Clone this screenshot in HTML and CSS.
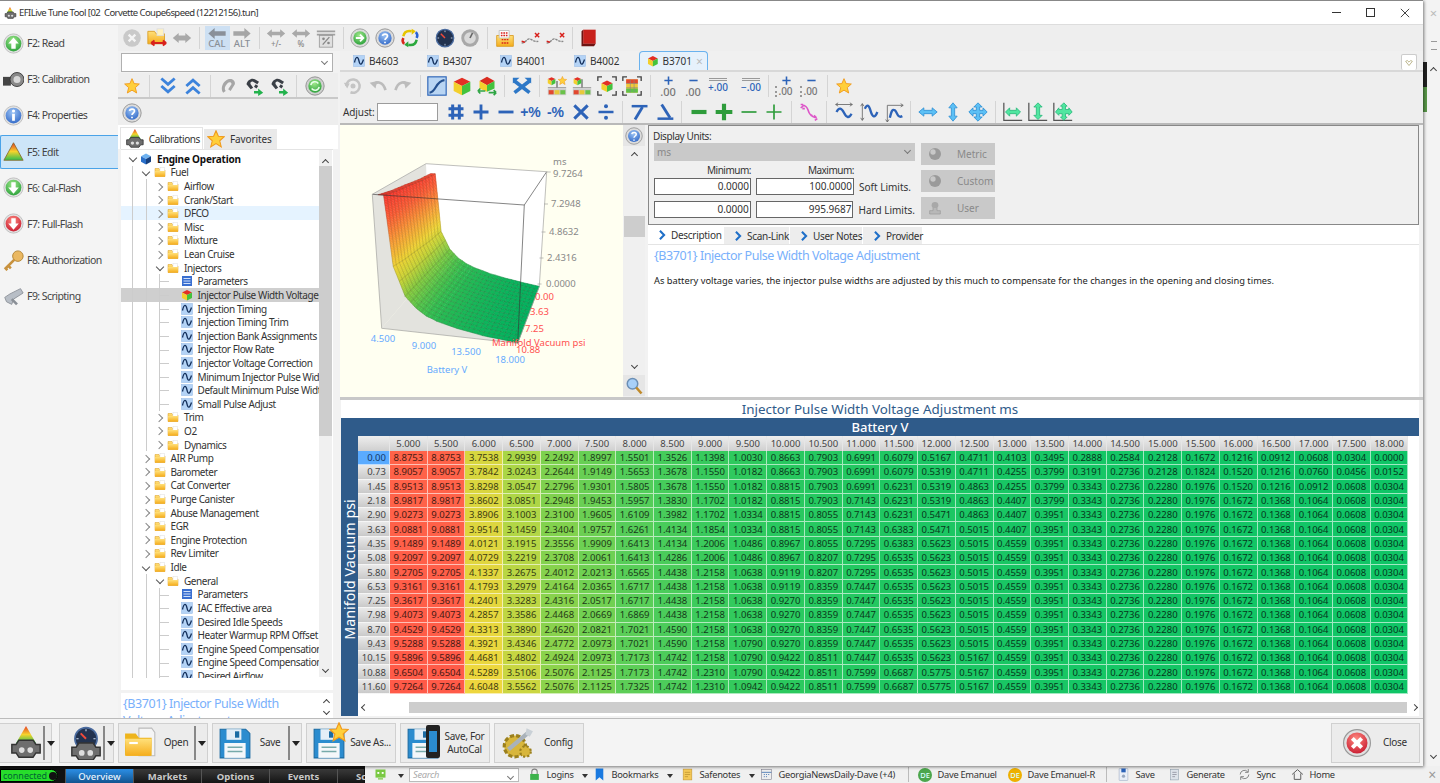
FILE: index.html
```html
<!DOCTYPE html>
<html lang="en">
<head>
<meta charset="utf-8">
<title>EFILive Tune Tool</title>
<link rel="stylesheet" href="styles.css">
</head>
<body>
<svg class="defs" width="0" height="0">
<defs>
<linearGradient id="triG" x1="0" y1="0" x2="0" y2="1"><stop offset="0" stop-color="#e53b24"/><stop offset=".5" stop-color="#f6d32c"/><stop offset="1" stop-color="#2ebd4e"/></linearGradient>
<radialGradient id="gGreen" cx=".45" cy=".3" r=".8"><stop offset="0" stop-color="#9fe88a"/><stop offset="1" stop-color="#1f9a33"/></radialGradient>
<radialGradient id="gRed" cx=".45" cy=".3" r=".8"><stop offset="0" stop-color="#ff8a80"/><stop offset="1" stop-color="#c4122a"/></radialGradient>
<radialGradient id="gBlue" cx=".45" cy=".3" r=".8"><stop offset="0" stop-color="#9cc4f5"/><stop offset="1" stop-color="#2a62c4"/></radialGradient>
<linearGradient id="fold" x1="0" y1="0" x2="0" y2="1"><stop offset="0" stop-color="#ffe07a"/><stop offset="1" stop-color="#f5ad1c"/></linearGradient>
<symbol id="star" viewBox="0 0 24 24"><polygon points="12,1 15.2,8.4 23,9 17,14.4 19,22.5 12,18.2 5,22.5 7,14.4 1,9 8.8,8.4" fill="#ffcf3a" stroke="#f09a1e" stroke-width="1.4"/></symbol>
<symbol id="cube" viewBox="0 0 24 24"><polygon points="12,2 22,7 12,12 2,7" fill="#e32f24"/><polygon points="2,7 12,12 12,23 2,18" fill="#f3cf2c"/><polygon points="22,7 12,12 12,23 22,18" fill="#43c23d"/></symbol>
<symbol id="cube2" viewBox="0 0 24 24"><polygon points="12,1 21,6 12,11 3,6" fill="#d92c20"/><polygon points="3,6 12,11 12,19 3,15" fill="#f3cf2c"/><polygon points="21,6 12,11 12,19 21,15" fill="#43c23d"/><path d="M1 18h9M1 18l3-3M1 18l3 3M23 20h-9M23 20l-3-3M23 20l-3 3" stroke="#2fa544" stroke-width="2" fill="none"/></symbol>
<symbol id="cube3" viewBox="0 0 24 24"><polygon points="12,1 22,6.5 12,12 2,6.5" fill="#6fb2f0"/><polygon points="2,6.5 12,12 12,23 2,17.5" fill="#2a6fc9"/><polygon points="22,6.5 12,12 12,23 22,17.5" fill="#16407f"/></symbol>
<symbol id="wave" viewBox="0 0 24 24"><rect x="1" y="1" width="22" height="22" fill="#b4d3f6" stroke="#8fb6e6"/><path d="M3 15c3-14 7-12 9-3s5 9 9-3" fill="none" stroke="#14305c" stroke-width="2.6"/></symbol>
<symbol id="fld" viewBox="0 0 24 24"><path d="M2 5h8l2 3h10v13H2z" fill="url(#fold)" stroke="#d99a20"/><rect x="12" y="3" width="9" height="8" fill="#fff" stroke="#ddd"/><path d="M2 10h20v11H2z" fill="url(#fold)"/></symbol>
<symbol id="lst" viewBox="0 0 24 24"><rect x="2" y="2" width="20" height="20" fill="#3a6fd0"/><path d="M5 7h14M5 12h14M5 17h14" stroke="#cfe0fa" stroke-width="2"/></symbol>
<symbol id="help" viewBox="0 0 24 24"><circle cx="12" cy="12" r="11" fill="#dcdcdc" stroke="#8b8b8b"/><circle cx="12" cy="12" r="8" fill="url(#gBlue)"/><path d="M9 9.5c.5-3 6-3 6 .2 0 2.3-3 2.3-3 4.6M12 16.6v1.6" stroke="#fff" stroke-width="2" fill="none"/></symbol>
<symbol id="stop" viewBox="0 0 24 24"><circle cx="12" cy="12" r="10.5" fill="#c9c9c9"/><path d="M8 8l8 8M16 8l-8 8" stroke="#f4f4f4" stroke-width="2.8"/></symbol>
<symbol id="foldred" viewBox="0 0 24 24"><path d="M1 4h8l2 3h10v12H1z" fill="url(#fold)" stroke="#d99a20"/><rect x="12" y="1" width="8" height="8" fill="#fff2c0" stroke="#ddd"/><path d="M5 18h18M5 18l4-3M5 18l4 3M23 18l-4-3M23 18l-4 3" stroke="#d8211c" stroke-width="2.4" fill="none"/></symbol>
<symbol id="dbl" viewBox="0 0 24 24"><path d="M8 6L1 12l7 6v-3h8v3l7-6-7-6v3H8z" fill="#a9a9a9"/></symbol>
<symbol id="arL" viewBox="0 0 24 14"><path d="M9 0L1 7l8 7v-4h14V4H9z" fill="#8a9099"/></symbol>
<symbol id="arR" viewBox="0 0 24 14"><path d="M15 0l8 7-8 7v-4H1V4h14z" fill="#a6a6a6"/></symbol>
<symbol id="dblS" viewBox="0 0 24 12"><path d="M7 1L1 6l6 5V8h10v3l6-5-6-5v3H7z" fill="#a9a9a9"/></symbol>
<symbol id="calc" viewBox="0 0 24 24"><path d="M1 4h22M1 8h22" stroke="#a0a0a0" stroke-width="2"/><rect x="4" y="9" width="16" height="14" fill="#e0e0e0" stroke="#9a9a9a"/><path d="M8 20l8-9" stroke="#888" stroke-width="1.6"/><circle cx="9" cy="13" r="1.6" fill="#888"/><circle cx="15" cy="18" r="1.6" fill="#888"/></symbol>
<symbol id="ggo" viewBox="0 0 24 24"><circle cx="12" cy="12" r="11" fill="#dcdcdc" stroke="#999"/><circle cx="12" cy="12" r="8" fill="url(#gGreen)"/><path d="M7 12h9M12 8l4 4-4 4" stroke="#fff" stroke-width="2.2" fill="none"/></symbol>
<symbol id="grot" viewBox="0 0 24 24"><circle cx="12" cy="12" r="11" fill="#cfcfcf" stroke="#888"/><circle cx="12" cy="12" r="8" fill="url(#gGreen)"/><path d="M7 11a5 5 0 0 1 9-2M17 13a5 5 0 0 1-9 2" stroke="#e8ffe8" stroke-width="1.8" fill="none"/></symbol>
<symbol id="arrows" viewBox="0 0 24 24"><path d="M4 10c1-5 5-7 10-6" stroke="#e6c400" stroke-width="3" fill="none"/><path d="M14 1l5 3-5 4z" fill="#e6c400"/><path d="M20 14c-1 5-5 7-10 6" stroke="#2aa83c" stroke-width="3" fill="none"/><path d="M10 23l-5-3 5-4z" fill="#2aa83c"/><path d="M19 5c2 2 2 5 1 7" stroke="#2a62d4" stroke-width="3" fill="none"/><path d="M5 19c-2-2-2-5-1-7" stroke="#d8291c" stroke-width="3" fill="none"/></symbol>
<symbol id="gauge" viewBox="0 0 24 24"><circle cx="12" cy="12" r="10.5" fill="#22324f" stroke="#4a6b9f" stroke-width="1.5"/><path d="M12 12L7 7" stroke="#f24a3a" stroke-width="1.8"/><path d="M12 3v2M21 12h-2M3 12h2M12 21v-2" stroke="#cfe0f5"/></symbol>
<symbol id="gaugeg" viewBox="0 0 24 24"><circle cx="12" cy="12" r="10.5" fill="#a8a8a8"/><circle cx="12" cy="12" r="7" fill="#d9d9d9"/><path d="M12 12l3-6" stroke="#666" stroke-width="2"/></symbol>
<symbol id="fstar" viewBox="0 0 24 24"><path d="M2 9h20v13H2z" fill="url(#fold)" stroke="#d99a20"/><path d="M5 3h12v9H5z" fill="#fff" stroke="#bbb"/><path d="M7 6h8M7 9h8M8 14h8M8 18h8" stroke="#d8211c" stroke-width="1.6" stroke-dasharray="2 1"/></symbol>
<symbol id="gx" viewBox="0 0 24 24"><path d="M2 18c5 0 6-5 9-5s5 4 11 3" stroke="#888" stroke-width="1.6" fill="none" stroke-dasharray="3 1"/><path d="M2 16l4 1M18 6l5 5M23 6l-5 5" stroke="#d8211c" stroke-width="1.8"/></symbol>
<symbol id="book" viewBox="0 0 24 24"><path d="M5 2h15v17H5z" fill="#c8211c"/><path d="M5 2L3 4v18h15l2-3H5z" fill="#6d1412"/></symbol>
<symbol id="dd2" viewBox="0 0 24 24"><path d="M4 3l8 7 8-7M4 12l8 7 8-7" fill="none" stroke="#3c83dc" stroke-width="3.4"/></symbol>
<symbol id="du2" viewBox="0 0 24 24"><path d="M4 12l8-7 8 7M4 21l8-7 8 7" fill="none" stroke="#3c83dc" stroke-width="3.4"/></symbol>
<symbol id="lnkg" viewBox="0 0 24 24"><path d="M5 20c-4-5 0-14 6-16 5-2 9 2 8 6l-5 8-3-2 4-6c0-3-3-3-5-1-3 3-4 6-2 9z" fill="#a6a6a6"/></symbol>
<symbol id="lnka" viewBox="0 0 24 24"><path d="M3 10c1-5 6-8 10-6l5 3-2 3-5-3c-2-1-4 1-3 3l3 4-3 2z" fill="#3a3f46"/><path d="M14 10l3 2-2 3-3-2z" fill="#3a3f46"/><path d="M12 18h5v-3l6 5-6 4v-3h-5z" fill="#22b24c"/></symbol>
<symbol id="undo0" viewBox="0 0 24 24"><path d="M4 12a8 8 0 1 1 5 7.5" fill="none" stroke="#c4c4c4" stroke-width="3"/><path d="M1 8l7 1-3 6z" fill="#c4c4c4"/><circle cx="12" cy="12" r="3" fill="#c4c4c4"/></symbol>
<symbol id="undo" viewBox="0 0 24 24"><path d="M7 11c3-5 11-5 14 6" fill="none" stroke="#bcbcbc" stroke-width="3.2"/><path d="M2 8l9-2-2 9z" fill="#bcbcbc"/></symbol>
<symbol id="redo" viewBox="0 0 24 24"><path d="M17 11c-3-5-11-5-14 6" fill="none" stroke="#bcbcbc" stroke-width="3.2"/><path d="M22 8l-9-2 2 9z" fill="#bcbcbc"/></symbol>
<symbol id="gbox" viewBox="0 0 24 24"><rect x="1" y="1" width="22" height="22" fill="#b9d5f3" stroke="#2e66b8" stroke-width="1.4"/><path d="M3 20c8 0 7-14 18-15" fill="none" stroke="#24508f" stroke-width="2.6"/></symbol>
<symbol id="xarr" viewBox="0 0 24 24"><path d="M3 6l18 14M21 6L3 20" stroke="#2e78c7" stroke-width="4.4"/><path d="M1 2h8L1 9zM23 2h-8l8 7z" fill="#2e78c7"/></symbol>
<symbol id="tbar" viewBox="0 0 24 24"><path d="M1 15h22v8H1z" fill="#ccc"/><path d="M2 17h6v5H2z" fill="#e2482f"/><path d="M9 17h6v5H9z" fill="#e8c93a"/><path d="M16 17h6v5h-6z" fill="#6ac24a"/><path d="M1 14h22" stroke="#888"/><path d="M12 6v8" stroke="#888" stroke-width="2"/><use href="#cube" x="0" y="0" width="11" height="12"/><use href="#star" x="13" y="0" width="11" height="11"/></symbol>
<symbol id="tbar2" viewBox="0 0 24 24"><path d="M1 15h22v8H1z" fill="#ccc"/><path d="M2 17h6v5H2z" fill="#e2482f"/><path d="M9 17h6v5H9z" fill="#e8c93a"/><path d="M16 17h6v5h-6z" fill="#6ac24a"/><path d="M1 14h22" stroke="#888"/><path d="M12 4v10" stroke="#888" stroke-width="2"/><use href="#cube" x="1" y="0" width="11" height="12"/></symbol>
<symbol id="cfit" viewBox="0 0 24 24"><use href="#cube" x="4" y="3" width="16" height="18"/><path d="M1 6V1h5M23 6V1h-5M1 18v5h5M23 18v5h-5" fill="none" stroke="#444" stroke-width="1.6"/></symbol>
<symbol id="hfit" viewBox="0 0 24 24"><path d="M5 4h14v16H5z" fill="#f0c93a"/><path d="M5 4h14v5H5z" fill="#e2482f"/><path d="M5 15h14v5H5z" fill="#5ec24a"/><path d="M10 4v16M14.5 4v16M5 9h14M5 14h14" stroke="#888" stroke-width=".7"/><path d="M1 6V1h5M23 6V1h-5M1 18v5h5M23 18v5h-5" fill="none" stroke="#444" stroke-width="1.6"/></symbol>
<symbol id="hash" viewBox="0 0 24 24"><path d="M8 3v18M16 3v18M3 8h18M3 16h18" stroke="#2d63b8" stroke-width="3.6"/></symbol>
<symbol id="plus" viewBox="0 0 24 24"><path d="M12 3v18M3 12h18" stroke="#2d63b8" stroke-width="3.4"/></symbol>
<symbol id="minus" viewBox="0 0 24 24"><path d="M3 12h18" stroke="#2d63b8" stroke-width="3.4"/></symbol>
<symbol id="times" viewBox="0 0 24 24"><path d="M4 4l16 16M20 4L4 20" stroke="#2d63b8" stroke-width="3.6"/></symbol>
<symbol id="div" viewBox="0 0 24 24"><path d="M3 12h18" stroke="#2d63b8" stroke-width="3"/><circle cx="12" cy="5" r="2.4" fill="#2d63b8"/><circle cx="12" cy="19" r="2.4" fill="#2d63b8"/></symbol>
<symbol id="top" viewBox="0 0 24 24"><path d="M2 5h19" stroke="#2d63b8" stroke-width="3"/><path d="M6 21l9-15" stroke="#2d63b8" stroke-width="3.4"/></symbol>
<symbol id="bot" viewBox="0 0 24 24"><path d="M3 20h19" stroke="#2d63b8" stroke-width="3"/><path d="M18 19L8 3" stroke="#2d63b8" stroke-width="3.4"/></symbol>
<symbol id="gm" viewBox="0 0 24 24"><path d="M3 12h18" stroke="#2e9c3b" stroke-width="5"/></symbol>
<symbol id="gp" viewBox="0 0 24 24"><path d="M12 2v20M2 12h20" stroke="#2e9c3b" stroke-width="5"/></symbol>
<symbol id="tm" viewBox="0 0 24 24"><path d="M3 12h18" stroke="#2e9c3b" stroke-width="2"/></symbol>
<symbol id="tp" viewBox="0 0 24 24"><path d="M12 3v18M3 12h18" stroke="#2e9c3b" stroke-width="2"/></symbol>
<symbol id="pink" viewBox="0 0 24 24"><path d="M4 4c5 0 6 3 7 6 1 4 3 7 9 9" fill="none" stroke="#dd55c8" stroke-width="2"/><path d="M2 3l3 0M4 8l3 0M14 16l2 0M19 22l3 -2M2 7l3-2M18 16l3 3" stroke="#dd55c8" stroke-width="2"/></symbol>
<symbol id="w1" viewBox="0 0 24 24"><path d="M2 3h20M2 3l3-2M2 3l3 2M22 3l-3-2M22 3l-3 2" stroke="#666" fill="none"/><path d="M3 12c3-6 6-5 9 1s6 7 9 1" fill="none" stroke="#2d63b8" stroke-width="2.8"/></symbol>
<symbol id="w2" viewBox="0 0 24 24"><path d="M4 2v20M4 2L2 5M4 2l2 3M4 22l-2-3M4 22l2-3" stroke="#666" fill="none"/><path d="M7 8c3-6 5-4 7 3s5 9 8 1" fill="none" stroke="#2d63b8" stroke-width="2.8"/></symbol>
<symbol id="w3" viewBox="0 0 24 24"><path d="M4 4v20M4 24l-2-3M4 24l2-3M4 4h19M23 4l-3-2M23 4l-3 2" stroke="#666" fill="none"/><path d="M7 19c2-8 3-11 6-9s3 10 9 7" fill="none" stroke="#2d63b8" stroke-width="2.8"/></symbol>
<symbol id="h" viewBox="0 0 24 24"><path d="M1 12l6-5v3h10V7l6 5-6 5v-3H7v3z" fill="#5cc0f5" stroke="#2e8fd4"/></symbol>
<symbol id="v" viewBox="0 0 24 24"><path d="M12 1l5 6h-3v10h3l-5 6-5-6h3V7H7z" fill="#5cc0f5" stroke="#2e8fd4"/></symbol>
<symbol id="m" viewBox="0 0 24 24"><path d="M12 1l5 5h-3v4h4V7l5 5-5 5v-3h-4v4h3l-5 5-5-5h3v-4H6v3l-5-5 5-5v3h4V6H7z" fill="#5cc0f5" stroke="#2e8fd4"/></symbol>
<symbol id="ah" viewBox="0 0 24 24"><path d="M1 1v21h22" fill="none" stroke="#555" stroke-width="1.5"/><path d="M3 12l5-5v3h8V7l5 5-5 5v-3H8v3z" fill="#50e6a0" stroke="#2ab87c"/></symbol>
<symbol id="av" viewBox="0 0 24 24"><path d="M1 1v21h22" fill="none" stroke="#555" stroke-width="1.5"/><path d="M12 1l5 5h-3v10h3l-5 5-5-5h3V6H7z" fill="#50e6a0" stroke="#2ab87c"/></symbol>
<symbol id="am" viewBox="0 0 24 24"><path d="M1 1v21h22" fill="none" stroke="#555" stroke-width="1.5"/><path d="M13 1l4 4h-2v4h4V7l4 5-4 4v-2h-4v4h2l-4 4-4-4h2v-4H7v2l-4-4 4-5v2h4V5H9z" fill="#50e6a0" stroke="#2ab87c"/></symbol>
<symbol id="mag" viewBox="0 0 24 24"><circle cx="10" cy="9" r="7" fill="#a8d0f8" stroke="#6b8fb5" stroke-width="2"/><path d="M15 14l7 8" stroke="#c08a2a" stroke-width="3.5"/></symbol>
<symbol id="engine" viewBox="0 0 24 24"><path d="M2 13h3l2-3h10l2 3h3v6h-3l-2 3H7l-2-3H2z" fill="#6e6e6e" stroke="#333"/><circle cx="9" cy="17" r="2" fill="#ddd"/><circle cx="15" cy="17" r="2" fill="#ddd"/></symbol>
<symbol id="tri" viewBox="0 0 24 24"><polygon points="12,2 23,22 1,22" fill="url(#triG)" stroke="#8a6a30"/></symbol>
<symbol id="triE" viewBox="0 0 24 24"><polygon points="12,0 19,12 5,12" fill="url(#triG)"/><use href="#engine" x="0" y="0" width="24" height="24"/></symbol>
<symbol id="gauE" viewBox="0 0 24 24"><use href="#gauge" x="3" y="0" width="18" height="18"/><use href="#engine" x="0" y="2" width="24" height="24"/></symbol>
<symbol id="up" viewBox="0 0 24 24"><circle cx="12" cy="12" r="11" fill="#e2e2e2" stroke="#bbb"/><circle cx="12" cy="12" r="9" fill="url(#gGreen)"/><path d="M12 5l6 7h-3.5v6h-5v-6H6z" fill="#fff"/></symbol>
<symbol id="dn" viewBox="0 0 24 24"><circle cx="12" cy="12" r="11" fill="#e2e2e2" stroke="#bbb"/><circle cx="12" cy="12" r="9" fill="url(#gGreen)"/><path d="M12 19l6-7h-3.5V6h-5v6H6z" fill="#fff"/></symbol>
<symbol id="dnr" viewBox="0 0 24 24"><circle cx="12" cy="12" r="11" fill="#e2e2e2" stroke="#bbb"/><circle cx="12" cy="12" r="9" fill="url(#gRed)"/><path d="M12 19l6-7h-3.5V6h-5v6H6z" fill="#fff"/></symbol>
<symbol id="info" viewBox="0 0 24 24"><circle cx="12" cy="12" r="11" fill="#e2e2e2" stroke="#bbb"/><circle cx="12" cy="12" r="9" fill="url(#gBlue)"/><path d="M12 10v8" stroke="#fff" stroke-width="3.2"/><circle cx="12" cy="6.8" r="1.8" fill="#fff"/></symbol>
<symbol id="cam" viewBox="0 0 24 24"><rect x="0" y="9" width="9" height="10" fill="#444"/><circle cx="16" cy="12" r="8" fill="#8a8a8a" stroke="#333"/><circle cx="16" cy="12" r="4" fill="#d8d8d8"/></symbol>
<symbol id="key" viewBox="0 0 24 24"><circle cx="17" cy="7" r="6" fill="#eab862" stroke="#b07f2a"/><path d="M13 11L2 22M6 18l3 3M3 21l2 2" stroke="#c8923e" stroke-width="3"/></symbol>
<symbol id="wr" viewBox="0 0 24 24"><path d="M2 13l6-4 12-6 3 5-11 7-2 6-6-3z" fill="#b8bec6" stroke="#8a8f96"/><path d="M10 15l6 6" stroke="#8a8f96" stroke-width="3"/></symbol>
<symbol id="folderB" viewBox="0 0 32 32"><path d="M14 2h12l3 4v22H14z" fill="#f5f5f5" stroke="#bbb"/><path d="M1 7h10l3 4h12v17H1z" fill="#eeb41c"/><path d="M1 12h25l-1 16H2z" fill="url(#fold)"/><rect x="5" y="15" width="8" height="2" fill="#fff"/></symbol>
<symbol id="floppy" viewBox="0 0 32 32"><path d="M2 3h24l4 4v23H2z" fill="#2b8ccf" stroke="#1b6ba3"/><rect x="8" y="3" width="14" height="10" fill="#e4eef7"/><rect x="16" y="5" width="4" height="6" fill="#1b6ba3"/><rect x="6" y="16" width="20" height="14" fill="#f4f7fa"/><path d="M9 20h14M9 24h14" stroke="#7aa" stroke-width="1.4"/></symbol>
<symbol id="cfg" viewBox="0 0 32 32"><circle cx="14" cy="19" r="10" fill="#d8b63c" stroke="#9b801e" stroke-width="3" stroke-dasharray="4 2"/><circle cx="24" cy="24" r="5" fill="#d8b63c" stroke="#9b801e" stroke-width="2" stroke-dasharray="2 2"/><path d="M8 22L27 6" stroke="#a9b2ba" stroke-width="4"/><path d="M25 2l6 3-3 5-4-2z" fill="#c9d0d6"/></symbol>
<symbol id="close" viewBox="0 0 24 24"><circle cx="12" cy="12" r="11.5" fill="#e0e0e0" stroke="#999"/><circle cx="12" cy="12" r="9" fill="url(#gRed)"/><path d="M8 8l8 8M16 8l-8 8" stroke="#fff" stroke-width="3.4"/></symbol>
<symbol id="sphere" viewBox="0 0 24 24"><circle cx="12" cy="12" r="9" fill="#9a9a9a"/><circle cx="9" cy="9" r="4" fill="#c8c8c8"/></symbol>
<symbol id="usr" viewBox="0 0 24 24"><circle cx="12" cy="8" r="5" fill="#a8a8a8"/><path d="M9 12v4H4v5h16v-5h-5v-4" fill="#b8b8b8" stroke="#999"/></symbol>
<symbol id="hdr" viewBox="0 0 24 24"><path d="M7 2l10 10L7 22" fill="none" stroke="#1f6fc8" stroke-width="5"/></symbol>
<symbol id="note" viewBox="0 0 24 24"><rect x="4" y="2" width="16" height="20" fill="#f4c957" stroke="#c09230"/><path d="M7 8h10M7 12h10M7 16h6" stroke="#a67d20"/></symbol>
<symbol id="news" viewBox="0 0 24 24"><rect x="3" y="3" width="18" height="18" fill="#eee" stroke="#778"/><path d="M3 8h18M7 12h2M11 12h2M15 12h2M7 16h2M11 16h2" stroke="#3c6fb0" stroke-width="1.5"/></symbol>
<symbol id="lock" viewBox="0 0 24 24"><path d="M7 11V7a5 5 0 0 1 10 0v4" fill="none" stroke="#888" stroke-width="2"/><rect x="4" y="11" width="16" height="11" fill="#3db24c"/></symbol>
<symbol id="bkm" viewBox="0 0 24 24"><path d="M5 1h14v22l-7-6-7 6z" fill="#1a7ae0"/></symbol>
<symbol id="sv" viewBox="0 0 24 24"><rect x="4" y="1" width="16" height="22" rx="1" fill="#e8eef8" stroke="#98a8c0"/><rect x="8" y="1" width="8" height="7" fill="#2a62b8"/><circle cx="12" cy="15" r="3" fill="#98a8c0"/></symbol>
<symbol id="gen" viewBox="0 0 24 24"><rect x="5" y="3" width="14" height="19" fill="#dde3ea" stroke="#8898a8"/><path d="M8 8h8M8 12h8M8 16h5" stroke="#667"/></symbol>
<symbol id="syn" viewBox="0 0 24 24"><path d="M4 12a8 8 0 0 1 14-5M20 12a8 8 0 0 1-14 5" fill="none" stroke="#777" stroke-width="1.6"/><path d="M19 2v6h-6M5 22v-6h6" fill="none" stroke="#777" stroke-width="1.6"/></symbol>
<symbol id="hom" viewBox="0 0 24 24"><path d="M2 12L12 3l10 9M6 10v11h12V10" fill="none" stroke="#555" stroke-width="1.7"/></symbol>
<symbol id="bot2" viewBox="0 0 24 24"><rect x="4" y="4" width="16" height="13" fill="#7ac943"/><rect x="7" y="8" width="3" height="3" fill="#fff"/><rect x="14" y="8" width="3" height="3" fill="#fff"/><rect x="8" y="18" width="8" height="2" fill="#7ac943"/></symbol>
<symbol id="app" viewBox="0 0 24 24"><polygon points="11,1 17,12 5,12" fill="url(#triG)"/><use href="#engine" x="0" y="0" width="24" height="24"/></symbol>
</defs>
</svg>

<div class="app">
  <div class="top">
    <div class="window">
      <header class="titlebar">
        <svg class="tapp"><use href="#app"/></svg>
        <span class="ttext">EFILive Tune Tool [02&nbsp; Corvette Coupe6speed (12212156).tun]</span>
        <span class="wctl"><span class="wmin"></span><span class="wmax"></span><svg class="wx" viewBox="0 0 12 12"><path d="M1 1l10 10M11 1L1 11" stroke="#333" stroke-width="1.1"/></svg></span>
      </header>
      <div class="wbody">
        <nav class="side">
          <div class="nav"><svg><use href="#up"/></svg>F2: Read</div>
          <div class="nav"><svg><use href="#cam"/></svg>F3: Calibration</div>
          <div class="nav"><svg><use href="#info"/></svg>F4: Properties</div>
          <div class="nav on"><svg><use href="#tri"/></svg>F5: Edit</div>
          <div class="nav"><svg><use href="#dn"/></svg>F6: Cal-Flash</div>
          <div class="nav"><svg><use href="#dnr"/></svg>F7: Full-Flash</div>
          <div class="nav"><svg><use href="#key"/></svg>F8: Authorization</div>
          <div class="nav"><svg><use href="#wr"/></svg>F9: Scripting</div>
        </nav>
        <div class="content">
          <div class="tb tb1">
            <span class="b"><svg><use href="#stop"/></svg></span>
            <span class="b"><svg><use href="#foldred"/></svg></span>
            <span class="b"><svg><use href="#dbl"/></svg></span>
            <i class="sp"></i>
            <span class="b col sel"><svg class="ah"><use href="#arL"/></svg><small>CAL</small></span>
            <span class="b col"><svg class="ah"><use href="#arR"/></svg><small>ALT</small></span>
            <i class="sp s9"></i>
            <span class="b col"><svg class="ah"><use href="#dblS"/></svg><small class="tiny">+/-</small></span>
            <span class="b col"><svg class="ah"><use href="#dblS"/></svg><small class="tiny">%</small></span>
            <span class="b"><svg><use href="#calc"/></svg></span>
            <i class="sp s9"></i>
            <span class="b"><svg><use href="#ggo"/></svg></span>
            <span class="b"><svg><use href="#help"/></svg></span>
            <span class="b"><svg><use href="#arrows"/></svg></span>
            <i class="sp"></i>
            <span class="b"><svg><use href="#gauge"/></svg></span>
            <span class="b"><svg><use href="#gaugeg"/></svg></span>
            <i class="sp"></i>
            <span class="b"><svg><use href="#fstar"/></svg></span>
            <span class="b"><svg><use href="#gx"/></svg></span>
            <span class="b"><svg><use href="#gx"/></svg></span>
            <i class="sp s9"></i>
            <span class="b"><svg><use href="#book"/></svg></span>
          </div>
          <div class="panels">
            <aside class="left">
              <div class="combo"><span class="cv"></span></div>
              <div class="tb tbl">
                <span class="b"><svg class="st"><use href="#star"/></svg></span>
                <i class="sp s2"></i>
                <span class="b"><svg><use href="#dd2"/></svg></span>
                <span class="b"><svg><use href="#du2"/></svg></span>
                <i class="sp s2"></i>
                <span class="b"><svg><use href="#lnkg"/></svg></span>
                <span class="b"><svg><use href="#lnka"/></svg></span>
                <span class="b"><svg><use href="#lnka"/></svg></span>
                <i class="sp s2"></i>
                <span class="b"><svg><use href="#grot"/></svg></span>
              </div>
              <div class="tb tbh"><span class="b"><svg><use href="#help"/></svg></span></div>
              <div class="ltabs">
                <span class="ltab act"><svg><use href="#triE"/></svg>Calibrations</span>
                <span class="ltab"><svg><use href="#star"/></svg>Favorites</span>
              </div>
              <div class="treewrap">
                <div class="tree">
                  <div class="row r0"><i class="tw o"></i><svg><use href="#cube3"/></svg>Engine Operation</div>
                  <div class="row r1 g1"><i class="tw o"></i><svg><use href="#fld"/></svg>Fuel</div>
                  <div class="row r2 g2"><i class="tw"></i><svg><use href="#fld"/></svg>Airflow</div>
                  <div class="row r2 g2"><i class="tw"></i><svg><use href="#fld"/></svg>Crank/Start</div>
                  <div class="row r2 g2 hov"><i class="tw"></i><svg><use href="#fld"/></svg>DFCO</div>
                  <div class="row r2 g2"><i class="tw"></i><svg><use href="#fld"/></svg>Misc</div>
                  <div class="row r2 g2"><i class="tw"></i><svg><use href="#fld"/></svg>Mixture</div>
                  <div class="row r2 g2"><i class="tw"></i><svg><use href="#fld"/></svg>Lean Cruise</div>
                  <div class="row r2 g2"><i class="tw o"></i><svg><use href="#fld"/></svg>Injectors</div>
                  <div class="row r3 g3"><i class="tw n"></i><svg><use href="#lst"/></svg>Parameters</div>
                  <div class="row r3 g3 cur"><i class="tw n"></i><svg><use href="#cube"/></svg>Injector Pulse Width Voltage</div>
                  <div class="row r3 g3"><i class="tw n"></i><svg><use href="#wave"/></svg>Injection Timing</div>
                  <div class="row r3 g3"><i class="tw n"></i><svg><use href="#wave"/></svg>Injection Timing Trim</div>
                  <div class="row r3 g3"><i class="tw n"></i><svg><use href="#wave"/></svg>Injection Bank Assignments</div>
                  <div class="row r3 g3"><i class="tw n"></i><svg><use href="#wave"/></svg>Injector Flow Rate</div>
                  <div class="row r3 g3"><i class="tw n"></i><svg><use href="#wave"/></svg>Injector Voltage Correction</div>
                  <div class="row r3 g3"><i class="tw n"></i><svg><use href="#wave"/></svg>Minimum Injector Pulse Wid</div>
                  <div class="row r3 g3"><i class="tw n"></i><svg><use href="#wave"/></svg>Default Minimum Pulse Widt</div>
                  <div class="row r3 g3"><i class="tw n"></i><svg><use href="#wave"/></svg>Small Pulse Adjust</div>
                  <div class="row r2 g2"><i class="tw"></i><svg><use href="#fld"/></svg>Trim</div>
                  <div class="row r2 g2"><i class="tw"></i><svg><use href="#fld"/></svg>O2</div>
                  <div class="row r2 g2"><i class="tw"></i><svg><use href="#fld"/></svg>Dynamics</div>
                  <div class="row r1 g1"><i class="tw"></i><svg><use href="#fld"/></svg>AIR Pump</div>
                  <div class="row r1 g1"><i class="tw"></i><svg><use href="#fld"/></svg>Barometer</div>
                  <div class="row r1 g1"><i class="tw"></i><svg><use href="#fld"/></svg>Cat Converter</div>
                  <div class="row r1 g1"><i class="tw"></i><svg><use href="#fld"/></svg>Purge Canister</div>
                  <div class="row r1 g1"><i class="tw"></i><svg><use href="#fld"/></svg>Abuse Management</div>
                  <div class="row r1 g1"><i class="tw"></i><svg><use href="#fld"/></svg>EGR</div>
                  <div class="row r1 g1"><i class="tw"></i><svg><use href="#fld"/></svg>Engine Protection</div>
                  <div class="row r1 g1"><i class="tw"></i><svg><use href="#fld"/></svg>Rev Limiter</div>
                  <div class="row r1 g1"><i class="tw o"></i><svg><use href="#fld"/></svg>Idle</div>
                  <div class="row r2 g2"><i class="tw o"></i><svg><use href="#fld"/></svg>General</div>
                  <div class="row r3 g3"><i class="tw n"></i><svg><use href="#lst"/></svg>Parameters</div>
                  <div class="row r3 g3"><i class="tw n"></i><svg><use href="#wave"/></svg>IAC Effective area</div>
                  <div class="row r3 g3"><i class="tw n"></i><svg><use href="#wave"/></svg>Desired Idle Speeds</div>
                  <div class="row r3 g3"><i class="tw n"></i><svg><use href="#wave"/></svg>Heater Warmup RPM Offset</div>
                  <div class="row r3 g3"><i class="tw n"></i><svg><use href="#wave"/></svg>Engine Speed Compensation</div>
                  <div class="row r3 g3"><i class="tw n"></i><svg><use href="#wave"/></svg>Engine Speed Compensation</div>
                  <div class="row r3 g3"><i class="tw n"></i><svg><use href="#wave"/></svg>Desired Airflow</div>
                </div>
                <div class="vs tvs"><i class="ch u"></i><b class="th"></b><i class="ch d"></i></div>
              </div>
              <div class="ldesc"><span class="ldt">{B3701} Injector Pulse Width Voltage Adjustment</span><span class="lspin"><i class="ch u"></i><i class="ch d"></i></span></div>
            </aside>
            <main class="main">
              <div class="tabs">
                <span class="tab"><svg><use href="#wave"/></svg>B4603</span>
                <span class="tab"><svg><use href="#wave"/></svg>B4307</span>
                <span class="tab"><svg><use href="#wave"/></svg>B4001</span>
                <span class="tab"><svg><use href="#wave"/></svg>B4002</span>
                <span class="tab act"><svg><use href="#cube"/></svg>B3701<em>×</em></span>
                <span class="tabmenu"><svg viewBox="0 0 12 12"><path d="M2 4l4 5 4-5-2-1-2 2-2-2z" fill="none" stroke="#b0a878"/></svg></span>
              </div>
              <div class="tb tbm1">
                <span class="b"><svg><use href="#undo0"/></svg></span>
                <span class="b"><svg><use href="#undo"/></svg></span>
                <span class="b"><svg><use href="#redo"/></svg></span>
                <i class="sp s9"></i>
                <span class="b"><svg><use href="#gbox"/></svg></span>
                <span class="b"><svg><use href="#cube"/></svg></span>
                <span class="b"><svg><use href="#cube2"/></svg></span>
                <i class="sp"></i>
                <span class="b"><svg><use href="#xarr"/></svg></span>
                <i class="sp"></i>
                <span class="b"><svg><use href="#tbar"/></svg></span>
                <span class="b"><svg><use href="#tbar2"/></svg></span>
                <span class="b"><svg><use href="#cfit"/></svg></span>
                <span class="b"><svg><use href="#hfit"/></svg></span>
                <i class="sp s11"></i>
                <span class="b col"><svg class="sg"><use href="#plus"/></svg><small class="dz">.00</small></span>
                <span class="b col"><svg class="sg"><use href="#minus"/></svg><small class="dz">.00</small></span>
                <span class="b col"><u class="ln"></u><small class="dz blue">+.00</small></span>
                <span class="b col gapl"><u class="ln"></u><small class="dz blue">−.00</small></span>
                <i class="sp"></i>
                <span class="b col"><svg class="sg"><use href="#plus"/></svg><small class="dz bar">.00</small></span>
                <span class="b col"><svg class="sg"><use href="#minus"/></svg><small class="dz bar">.00</small></span>
                <i class="sp s3"></i>
                <span class="b"><svg class="st"><use href="#star"/></svg></span>
              </div>
              <div class="tb tbm2">
                <label class="adj">Adjust:</label><span class="adjin"></span>
                <span class="b"><svg><use href="#hash"/></svg></span>
                <span class="b"><svg><use href="#plus"/></svg></span>
                <span class="b"><svg><use href="#minus"/></svg></span>
                <span class="b glyph">+%</span>
                <span class="b glyph">-%</span>
                <span class="b"><svg><use href="#times"/></svg></span>
                <span class="b"><svg><use href="#div"/></svg></span>
                <i class="sp s9"></i>
                <span class="b"><svg><use href="#top"/></svg></span>
                <span class="b"><svg><use href="#bot"/></svg></span>
                <i class="sp s9"></i>
                <span class="b"><svg><use href="#gm"/></svg></span>
                <span class="b"><svg><use href="#gp"/></svg></span>
                <span class="b"><svg><use href="#tm"/></svg></span>
                <span class="b"><svg><use href="#tp"/></svg></span>
                <i class="sp"></i>
                <span class="b"><svg><use href="#pink"/></svg></span>
                <i class="sp"></i>
                <span class="b"><svg><use href="#w1"/></svg></span>
                <span class="b"><svg><use href="#w2"/></svg></span>
                <span class="b"><svg><use href="#w3"/></svg></span>
                <i class="sp s9"></i>
                <span class="b"><svg><use href="#h"/></svg></span>
                <span class="b"><svg><use href="#v"/></svg></span>
                <span class="b"><svg><use href="#m"/></svg></span>
                <i class="sp"></i>
                <span class="b"><svg><use href="#ah"/></svg></span>
                <span class="b"><svg><use href="#av"/></svg></span>
                <span class="b"><svg><use href="#am"/></svg></span>
              </div>
              <div class="mid">
                <div class="chart">
                  <svg class="plot" viewBox="0 0 283 272">
                    <polygon class="wall white" points="86,38.7 206.7,46.7 199.3,161.3 90,146.7"/>
                    <polygon class="wall white" points="32.3,69.3 86,38.7 206.7,46.7 184.3,80"/>
                    <polygon class="wall grey" points="32.3,69.3 86,38.7 90,146.7 41.7,203.3"/>
                    <polygon class="wall grey" points="41.7,203.3 90,146.7 199.3,161.3 177.7,218.3"/>
                    <g id="surf"></g>
                    <path class="fr" d="M32.3 69.3L184.3 80L177.7 218.3M184.3 80L206.7 46.7"/>
                    <path class="fr2" d="M32.3 69.3L86 38.7L206.7 46.7L199.3 161.3L177.7 218.3L41.7 203.3L32.3 69.3M206.7 47h4M204 79h4M201.5 107h4M199.5 133h4M197.5 159h4"/>
                    <text class="zt" x="213" y="39.5">ms</text>
                    <text class="zt" x="213" y="52">9.7264</text>
                    <text class="zt" x="211" y="82">7.2948</text>
                    <text class="zt" x="209" y="110">4.8632</text>
                    <text class="zt" x="207" y="136">2.4316</text>
                    <text class="zt" x="206" y="162">0.0000</text>
                    <text class="xt" x="43" y="217" text-anchor="middle">4.500</text>
                    <text class="xt" x="84" y="224" text-anchor="middle">9.000</text>
                    <text class="xt" x="126" y="230" text-anchor="middle">13.500</text>
                    <text class="xt" x="170" y="238" text-anchor="middle">18.000</text>
                    <text class="xt" x="107" y="248" text-anchor="middle">Battery V</text>
                    <text class="rt" x="195" y="175">0.00</text>
                    <text class="rt" x="190" y="190">3.63</text>
                    <text class="rt" x="185" y="207">7.25</text>
                    <text class="rt" x="176" y="228">10.88</text>
                    <text class="rt" x="152" y="221">Manifold Vacuum psi</text>
                  </svg>
                </div>
                <div class="cscroll">
                  <span class="sqb"><svg><use href="#help"/></svg></span>
                  <div class="vs cvs"><i class="ch u"></i><b class="th"></b><i class="ch d"></i></div>
                  <span class="sqb mg"><svg><use href="#mag"/></svg></span>
                </div>
                <div class="rcol">
                  <section class="units">
                    <div class="ulabel">Display Units:</div>
                    <div class="ugrid">
                      <div class="ucol">
                        <div class="ucombo">ms<span class="cv"></span></div>
                        <div class="lim head"><span class="lf">Minimum:</span><span class="lf m">Maximum:</span></div>
                        <div class="lim"><span class="inp">0.0000</span><span class="inp x">100.0000</span><span class="lt">Soft Limits.</span></div>
                        <div class="lim l2"><span class="inp">0.0000</span><span class="inp x">995.9687</span><span class="lt">Hard Limits.</span></div>
                      </div>
                      <div class="ubtns">
                        <span class="ub"><svg><use href="#sphere"/></svg>Metric</span>
                        <span class="ub"><svg><use href="#sphere"/></svg>Custom</span>
                        <span class="ub"><svg><use href="#usr"/></svg>User</span>
                      </div>
                    </div>
                  </section>
                  <div class="dtabs">
                    <span class="dtab act"><svg><use href="#hdr"/></svg>Description</span>
                    <span class="dtab"><svg><use href="#hdr"/></svg>Scan-Link</span>
                    <span class="dtab"><svg><use href="#hdr"/></svg>User Notes</span>
                    <span class="dtab"><svg><use href="#hdr"/></svg>Provider</span>
                  </div>
                  <div class="dbody">
                    <h2>{B3701} Injector Pulse Width Voltage Adjustment</h2>
                    <p>As battery voltage varies, the injector pulse widths are adjusted by this much to compensate for the changes in the opening and closing times.</p>
                  </div>
                </div>
              </div>
              <section class="tsec">
                <h1 class="ttl">Injector Pulse Width Voltage Adjustment ms</h1>
                <div class="tbox">
                  <div class="axx">Battery V</div>
                  <div class="tbody">
                    <div class="axy"><span>Manifold Vacuum psi</span></div>
                    <div class="tdata">
                      <div class="grid" id="grid"></div>
                      <div class="hs"><i class="ch l"></i><b class="hth"></b><i class="ch r"></i></div>
                    </div>
                  </div>
                </div>
              </section>
            </main>
          </div>
        </div>
      </div>
      <footer class="bbar">
        <span class="bb w1"><svg class="bi"><use href="#triE"/></svg><span class="dd"></span></span>
        <span class="bb w2"><svg class="bi"><use href="#gauE"/></svg><span class="dd"></span></span>
        <span class="bb w3"><svg class="bi"><use href="#folderB"/></svg><span class="bt">Open</span><span class="dd"></span></span>
        <span class="bb w3"><svg class="bi"><use href="#floppy"/></svg><span class="bt">Save</span><span class="dd"></span></span>
        <span class="bb w3"><svg class="bi"><use href="#floppy"/></svg><svg class="ov"><use href="#star"/></svg><span class="bt">Save As...</span></span>
        <span class="bb w3"><svg class="bi"><use href="#floppy"/></svg><span class="phone"></span><span class="bt">Save, For<br>AutoCal</span></span>
        <span class="bb w3"><svg class="bi"><use href="#cfg"/></svg><span class="bt">Config</span></span>
        <span class="bb w3 cl"><svg class="bi"><use href="#close"/></svg><span class="bt">Close</span></span>
      </footer>
    </div>
    <div class="strip">
      <div class="sa"><b class="k"></b><b class="gr"></b></div>
      <div class="sb"><i class="sx">×</i><i class="sm"></i><i class="ch u"></i><i class="ch d"></i></div>
    </div>
  </div>
  <div class="taskbar">
    <div class="dark">
      <span class="pill">connected<i></i></span>
      <span class="dt on">Overview</span><span class="dt">Markets</span><span class="dt">Options</span><span class="dt">Events</span><span class="dt sc">Sc</span>
    </div>
    <div class="light">
      <svg class="tic rb"><use href="#bot2"/></svg><i class="ca"></i>
      <span class="srch">Search<i class="cv"></i></span>
      <span class="ti t1"><svg class="tic"><use href="#lock"/></svg>Logins<i class="ca"></i></span>
      <span class="ti t2"><svg class="tic"><use href="#bkm"/></svg>Bookmarks<i class="ca"></i></span>
      <span class="ti t3"><svg class="tic"><use href="#note"/></svg>Safenotes<i class="ca"></i></span>
      <span class="ti t4"><svg class="tic"><use href="#news"/></svg>GeorgiaNewsDaily-Dave (+4)</span>
      <i class="vs2"></i>
      <span class="ti t5"><b class="de g">DE</b>Dave Emanuel</span>
      <span class="ti t6"><b class="de o">DE</b>Dave Emanuel-R</span>
      <i class="vs2"></i>
      <span class="ti t7"><svg class="tic"><use href="#sv"/></svg>Save</span>
      <span class="ti t8"><svg class="tic"><use href="#gen"/></svg>Generate</span>
      <span class="ti t9"><svg class="tic"><use href="#syn"/></svg>Sync</span>
      <span class="ti"><svg class="tic"><use href="#hom"/></svg>Home</span>
      <span class="tx">×</span>
    </div>
  </div>
</div>
<script src="app.js"></script>
</body>
</html>
```
FILE: styles.css
```css
*{box-sizing:border-box}
html,body{margin:0;padding:0;width:1440px;height:783px;overflow:hidden;background:#f0f0f0}
body{font-family:"Noto Sans","DejaVu Sans",sans-serif;font-size:10px;color:#333}
.defs{position:absolute}
i,em,u{font-style:normal;text-decoration:none}
.app{display:flex;flex-direction:column;width:1440px;height:783px}
.top{display:flex;height:766px}
.window{width:1423px;display:flex;flex-direction:column;background:#f2f2f2;border-top:1px solid #888;box-shadow:1px 1px 3px rgba(0,0,0,.5);z-index:2}
.titlebar{height:24px;background:#fff;display:flex;align-items:center;padding-left:4px;border-bottom:1px solid #ddd;flex:none}
.tapp{width:13px;height:14px;margin-right:2px}
.ttext{font-size:9.5px;letter-spacing:-.56px;color:#333;white-space:nowrap}
.wctl{margin-left:auto;display:flex;align-items:center}
.wmin{width:9px;height:1px;background:#333;margin-right:25px}
.wmax{width:9px;height:9px;border:1px solid #333;margin-right:25px}
.wx{width:10px;height:10px;margin-right:13px}
.wbody{display:flex;height:693px;flex:none}
.side{width:118px;flex:none;background:#f4f4f4}
.nav{height:36.2px;display:flex;align-items:center;padding-left:2px;gap:3px;font-size:10.5px;letter-spacing:-.55px;color:#444;border:1px solid transparent;border-right:0}
.nav svg{width:21px;height:21px;flex:none}
.nav.on{background:#cde5f8;border-color:#4aa3e8;border-radius:2px 0 0 2px;height:34px;margin:1px 0}
.content{flex:1;display:flex;flex-direction:column;min-width:0}
.tb{display:flex;align-items:center;background:#eeeeee}
.tb1{height:26px;padding-left:1.5px}
.b{width:25px;height:24px;flex:none;display:flex;align-items:center;justify-content:center}
.b svg{width:20px;height:20px}
.b svg.st{width:16px;height:16px}
.b.col{flex-direction:column;line-height:1;gap:0}
.b svg.ah{width:20px;height:11px}
.b svg.sg{width:11px;height:11px}
.b small{font-size:9.5px;color:#8a8f96;font-weight:500;line-height:10px}
.b small.tiny{font-size:8px;color:#888}
.sel{background:#cde0f3}
.sp{width:10px;height:22px;flex:none;position:relative;display:block}
.sp::before{content:"";display:block;width:1px;height:100%;margin:0 auto;background:#d4d4d4}
.sp.s9{width:9px}
.sp.s11{width:11px}
.panels{flex:1;display:flex;min-height:0}
.left{width:220px;flex:none;display:flex;flex-direction:column;background:#f2f2f2}
.combo{height:19px;margin:2px 5px 1px 3px;background:#fff;border:1px solid #b0b0b0;position:relative;flex:none}
.cv{position:absolute;right:5px;top:5px;width:5px;height:5px;border-right:1px solid #777;border-bottom:1px solid #777;transform:rotate(45deg)}
.tbl{height:26px;flex:none;padding:1px 0 0 1px;border-bottom:2px solid #c9c9c9}
.sp.s2{width:11px}
.tbh{height:26px;flex:none;padding:2px 0 0 1.5px}
.ltabs{display:flex;height:24px;flex:none;padding:2px 0 0 2px;background:#fff;align-items:flex-end}
.ltab{display:flex;align-items:center;height:20px;background:#e9e9e9;padding:0 5px 0 3px;gap:5px;font-size:10px;letter-spacing:-.1px;margin-left:1px;color:#333}
.ltab svg{width:18px;height:18px}
.ltab.act{height:22px;background:#fff;border:1px solid #e4e4e4;border-bottom:0;padding:0 2px 0 4px;margin-left:0;width:83px;gap:4px;letter-spacing:-.4px}
.ltab.act svg{width:20px;height:20px}
.treewrap{height:541px;flex:none;display:flex;align-items:flex-start;margin:0 5px 0 3px;background:#fff;border-top:1px solid #e4e4e4;overflow:hidden}
.tree{width:198px;height:528px;flex:none;padding-top:2px;overflow:hidden}
.row{height:13.62px;display:flex;align-items:center;white-space:nowrap;font-size:10px;letter-spacing:-.42px;color:#333;background-repeat:no-repeat}
.row svg{width:12px;height:12px;margin-right:5px;flex:none}
.tw{width:10px;height:10px;margin-right:3px;flex:none;position:relative;display:block}
.tw::before{content:"";position:absolute;left:2px;top:2.5px;width:5px;height:5px;border-top:1px solid #888;border-right:1px solid #888;transform:rotate(45deg)}
.tw.o::before{transform:rotate(135deg);left:2.5px;top:1.5px;border-color:#555}
.tw.n::before{display:none}
.r0{padding-left:6px;font-weight:700;color:#111;letter-spacing:-.2px}
.r1{padding-left:19.5px}
.r2{padding-left:33px}
.r3{padding-left:46.5px}
.g1{background-image:linear-gradient(#ccc,#ccc);background-size:1px 100%;background-position:11px 0}
.g2{background-image:linear-gradient(#ccc,#ccc),linear-gradient(#ccc,#ccc);background-size:1px 100%,1px 100%;background-position:11px 0,25px 0}
.g3{background-image:linear-gradient(#ccc,#ccc),linear-gradient(#ccc,#ccc),linear-gradient(#ccc,#ccc),linear-gradient(#ccc,#ccc);background-size:1px 100%,1px 100%,1px 100%,9px 1px;background-position:11px 0,25px 0,38px 0,39px 7px}
.hov{background-color:#e5f3ff}
.cur{background-color:#cfcfcf}
.vs{display:flex;flex-direction:column;align-items:center;background:#f0f0f0;position:relative}
.tvs{width:13px;height:527px;flex:none}
.th{display:block;background:#cdcdcd;width:100%}
.tvs .th{height:270px;margin-top:16px}
.ch{display:block;width:5px;height:5px;border-left:1.5px solid #444;border-top:1.5px solid #444;flex:none}
.ch.u{transform:rotate(45deg)}
.ch.d{transform:rotate(225deg)}
.ch.l{transform:rotate(-45deg)}
.ch.r{transform:rotate(135deg)}
.tvs .ch.u{position:absolute;top:10px}
.tvs .ch.d{position:absolute;bottom:5px}
.ldesc{margin:3px 5px 0 3px;flex:1;background:#fff;overflow:hidden;display:flex;font-size:12.5px;letter-spacing:-.43px;line-height:17px;color:#79b0fb;padding:2px 0 0 2px;min-height:0}
.ldt{flex:1}
.lspin{width:13px;display:flex;flex-direction:column;align-items:center;gap:4px;padding-top:5px}
.main{flex:1;display:flex;flex-direction:column;min-width:0;padding-left:2px}
.tabs{height:21px;flex:none;display:flex;align-items:flex-end;background:#f0f0f0;border-bottom:2px solid #d8d8d8;position:relative}
.tab{width:73.7px;height:18px;display:flex;align-items:center;padding-left:13px;gap:4px;font-size:10px;color:#333}
.tab svg{width:12px;height:12px}
.tab.act{width:69px;margin-left:4px;padding-left:7px;background:#e6f1fb;border:1px solid #6ab2ee;border-bottom:0;border-radius:4px 4px 0 0;height:19px}
.tab em{margin-left:auto;margin-right:4px;color:#bbb;font-size:12px}
.tabmenu{margin-left:auto;margin-right:6px;width:16px;height:16px;border:1px solid #ccc;border-bottom:0;border-radius:2px;background:#fff;display:flex;align-items:center;justify-content:center}
.tabmenu svg{width:10px;height:10px}
.tbm1{height:27px;flex:none;padding-left:.5px}
.tbm2{height:26px;flex:none;padding:1px 0 0 3px;border-bottom:2px solid #b9b9b9}
.sp.s3{width:8px}
.gapl{margin-left:8px}
.ln{display:block;width:18px;height:3px;border-top:1px solid #999;border-bottom:1px solid #999;margin-bottom:1px}
.b small.dz{font-size:11px;color:#777;line-height:11px}
.b small.dz.blue{color:#2d63b8;font-size:10px}
.b small.bar{border-left:2px dotted #999;padding-left:1px;margin-left:-4px;font-size:10px}
.adj{font-size:10px;width:34px;color:#333;letter-spacing:-.1px}
.adjin{width:61px;height:18px;background:#fff;border:1px solid #9c9c9c;margin-right:5px;flex:none}
.glyph{font:700 14px "Liberation Sans",sans-serif;color:#2d63b8}
.mid{display:flex;height:275px;flex:none;border-bottom:3px solid #c8c8c8}
.chart{width:283px;flex:none;background:#fffff1}
.plot{width:283px;height:272px;display:block}
.wall{stroke:none}
.white{fill:#fff}
.grey{fill:#e3e3de}
.fr{fill:none;stroke:#333;stroke-width:.6}
.fr2{fill:none;stroke:#a4a4a0;stroke-width:.7}
.zt{fill:#888;font-size:9.5px}
.xt{fill:#66aaff;font-size:9.5px}
.rt{fill:#ff5050;font-size:9.5px}
.cscroll{width:22px;flex:none;display:flex;flex-direction:column;align-items:center;background:#f0f0f0}
.sqb{width:22px;height:21px;display:flex;align-items:center;justify-content:center;background:#e6e6e6;flex:none}
.sqb svg{width:18px;height:18px}
.cvs{flex:1;width:21px}
.cvs .th{height:21px;margin-top:70px}
.cvs .ch.u{position:absolute;top:7px}
.cvs .ch.d{position:absolute;bottom:7px}
.mg{margin-bottom:1px}
.rcol{flex:1;margin-left:3px;margin-right:4px;display:flex;flex-direction:column;min-width:0;background:#fff;position:relative}
.units{height:100px;flex:none;background:#f0f0f0;border:1px solid #888;padding:3px 0 0 4px}
.ulabel{font-size:10px;height:14px;letter-spacing:-.4px}
.ugrid{display:flex;gap:6px}
.ucol{width:262px}
.ucombo{height:18px;background:#c9c9c9;color:#888;position:relative;padding:2px 3px;font-size:10px;margin-left:1px}
.lim{display:flex;align-items:center;gap:5px;font-size:10px;margin-left:1px;height:17px;margin-top:6px}
.lim.head{height:10px;margin-top:4px;margin-bottom:-3px;gap:5px;letter-spacing:-.5px}
.lim.l2{margin-top:6px}
.lf{width:97px;text-align:right}
.lf.m{width:98px}
.inp{width:97px;height:17px;background:#fff;border:1px solid #666;text-align:right;line-height:15px;padding-right:1px;font-size:10px}
.inp.x{width:98px}
.lt{font-size:10px;white-space:nowrap}
.ubtns{display:flex;flex-direction:column;gap:5px}
.ub{width:74px;height:22px;background:#c9c9c9;color:#8a8a8a;display:flex;align-items:center;padding-left:6px;font-size:10px;gap:0}
.ub svg{width:16px;height:16px;margin-right:14px}
.dtabs{height:20px;flex:none;display:flex;align-items:flex-end;background:#fff;border-bottom:1px solid #e4e4e4}
.dtab{height:17px;display:flex;align-items:center;background:#ededed;font-size:10px;letter-spacing:-.3px;padding:0 0 0 9px;gap:4px;margin-right:1px;white-space:nowrap}
.dtab svg{width:10px;height:12px;flex:none}
.dtab:nth-child(1){width:75px}
.dtab:nth-child(2){width:65px}
.dtab:nth-child(3){width:72px}
.dtab:nth-child(4){width:59px}
.dtab.act{background:#fff;height:19px}
.dbody{flex:1;padding:0 6px;background:#fff;overflow:hidden}
.dbody h2{margin:3px 0 0;font-size:12.5px;letter-spacing:-.45px;font-weight:400;color:#79b0fb;line-height:16px}
.dbody p{margin:10px 0 0;font-size:9.3px;line-height:14px;color:#222}
.tsec{flex:1;display:flex;flex-direction:column;min-height:0;padding:0 4px 2px 1px;background:#f2f2f2}
.ttl{height:18px;margin:0;flex:none;background:#fff;text-align:center;font-size:13.4px;font-weight:400;color:#2f5b8a;line-height:18px}
.tbox{flex:1;background:#2f5b8a;display:flex;flex-direction:column;min-height:0}
.axx{height:18px;flex:none;text-align:center;color:#fff;font-size:13px;font-weight:500;line-height:18px}
.tbody{flex:1;display:flex;min-height:0}
.axy{width:17px;flex:none;display:flex;align-items:center;justify-content:center;color:#fff;font-size:14.3px;padding-bottom:14px}
.axy span{transform:rotate(-90deg);white-space:nowrap}
.tdata{flex:1;background:#fff;display:flex;flex-direction:column;min-width:0}
.grid{display:grid;grid-template-columns:32px repeat(27,37.72px);grid-template-rows:15px repeat(17,14.3px);height:258px;flex:none;font-size:9.5px}
.grid div{display:flex;align-items:center;justify-content:center;border-right:1px solid rgba(255,255,255,.6);border-bottom:1px solid rgba(255,255,255,.6);white-space:nowrap}
.grid .hc{background:linear-gradient(#eeeeee,#cfcfcf);color:#444;border-right:1px solid #e6e6e6;border-bottom:0}
.grid .hr{background:linear-gradient(#e9e9e9,#c9c9c9);color:#444;justify-content:flex-end;padding-right:3px}
.grid .hr.s{background:#5aabff;color:#12386a}
.hs{height:11px;margin-top:8px;display:flex;align-items:center;padding-left:4px;background:#fff;flex:none}
.hth{display:block;background:#cdcdcd;height:11px;width:998px;margin-left:42px}
.hs .ch{width:5px;height:5px}
.hs .ch.r{margin-left:5px}
.bbar{flex:1;display:flex;align-items:center;gap:4px;background:#f4f4f4;border-top:1px solid #bbb}
.bb{height:40px;background:#ececec;border:1px solid #d0d0d0;display:flex;align-items:center;position:relative;flex:none;font-size:10px;color:#333}
.bb.w1{width:55px;margin-left:-3px;padding-left:11px}
.bb.w2{width:55px;padding-left:9px;margin-left:3px}
.bb.w3{width:90px;padding-left:5px}
.bi{width:34px;height:34px;flex:none}
.bt{flex:1;text-align:center;font-size:10px;letter-spacing:-.3px;line-height:13px;white-space:nowrap}
.dd{width:13px;height:34px;margin-left:auto;border-left:2px solid #888;position:relative;flex:none}
.dd::after{content:"";position:absolute;left:2px;top:15px;border:4px solid transparent;border-top:5px solid #222;border-bottom:0}
.ov{width:20px;height:20px;position:absolute;left:22px;top:-2px}
.phone{position:absolute;left:25px;top:1px;width:14px;height:33px;background:#2b8ccf;border-radius:2px;border:3px solid #222;border-top-width:6px;border-bottom-width:6px}
.bb.cl{margin-left:auto;margin-right:3px;width:89px}
.cl .bi{width:28px;height:28px;margin-left:6px}
.strip{flex:1;display:flex;background:#f3f3f3}
.sa{width:4px;display:flex;flex-direction:column;padding-top:62px}
.k{display:block;height:25px;background:#222}
.gr{display:block;height:25px;background:#5a9a4a}
.sb{flex:1;display:flex;flex-direction:column;align-items:center;color:#bbb;position:relative}
.sx{font-size:13px;line-height:14px;margin-top:6px}
.sm{display:block;width:6px;height:9px;margin-top:21px;border-top:1px solid #999;border-bottom:1px solid #999}
.sb .ch.u{position:absolute;top:68px}
.sb .ch.d{position:absolute;bottom:8px}
.taskbar{height:17px;flex:none;display:flex;background:#000;position:relative}
.dark{width:365px;flex:none;display:flex;align-items:flex-end;background:#111;overflow:hidden}
.pill{width:58px;height:13px;background:#27dd2b;border:1px solid #000;border-radius:0 7px 7px 0;color:#063;font-size:9px;line-height:11px;padding-left:2px;margin-bottom:1px;display:flex;align-items:center;gap:2px}
.pill i{width:8px;height:8px;border-radius:50%;background:#111;display:block}
.dt{width:68px;height:14px;background:linear-gradient(#3a3a3a,#141414);color:#c8c8c8;text-align:center;font-size:9.5px;font-weight:700;line-height:15px;flex:none;border-left:1px solid #555}
.dt.on{background:linear-gradient(#2c8fe6,#12548f);color:#e8f4ff;font-weight:500;margin-left:7px}
.dt.sc{width:27px;text-align:left;padding-left:18px}
.light{flex:1;display:flex;align-items:center;background:#f0f0f0;font-size:9.3px;color:#333;padding-left:8px;position:relative;letter-spacing:-.28px}
.tic{width:13px;height:13px;flex:none}
.rb{margin-right:6px;width:15px;height:15px}
.ca{display:block;border:3px solid transparent;border-top:4px solid #333;border-bottom:0;margin:2px 4px 0}
.srch{width:110px;height:14px;margin-left:1px;background:#fff;border:1px solid #bbb;color:#aaa;font-style:italic;padding-left:3px;position:relative;line-height:12px;flex:none}
.ti{display:flex;align-items:center;gap:5.5px;white-space:nowrap;flex:none}
.ti .ca{margin-left:3px}
.t1{margin-left:9px;width:65px}
.t2{width:88px}
.t3{width:79px}
.t4{width:145px}
.t5{margin-left:9px;width:90px}
.t6{width:95px}
.t7{margin-left:10px;width:51px}
.t8{width:70px}
.t9{width:53px}
.vs2{display:block;width:1px;height:15px;background:#bbb;margin-left:3px}
.de{width:14px;height:14px;border-radius:50%;display:flex;align-items:center;justify-content:center;font-size:7.5px;font-weight:500;color:#dff;letter-spacing:0}
.de.g{background:#4ca64c}
.de.o{background:#eeb000}
.tx{margin-left:auto;margin-right:4px;color:#999;font-size:14px;line-height:14px}
```
FILE: app.js
```js
var RAW=`8.8753 8.8753 3.7538 2.9939 2.2492 1.8997 1.5501 1.3526 1.1398 1.0030 0.8663 0.7903 0.6991 0.6079 0.5167 0.4711 0.4103 0.3495 0.2888 0.2584 0.2128 0.1672 0.1216 0.0912 0.0608 0.0304 0.0000
8.9057 8.9057 3.7842 3.0243 2.2644 1.9149 1.5653 1.3678 1.1550 1.0182 0.8663 0.7903 0.6991 0.6079 0.5319 0.4711 0.4255 0.3799 0.3191 0.2736 0.2128 0.1824 0.1520 0.1216 0.0760 0.0456 0.0152
8.9513 8.9513 3.8298 3.0547 2.2796 1.9301 1.5805 1.3678 1.1550 1.0182 0.8815 0.7903 0.6991 0.6231 0.5319 0.4863 0.4255 0.3799 0.3343 0.2736 0.2280 0.1976 0.1520 0.1216 0.0912 0.0608 0.0304
8.9817 8.9817 3.8602 3.0851 2.2948 1.9453 1.5957 1.3830 1.1702 1.0182 0.8815 0.7903 0.7143 0.6231 0.5319 0.4863 0.4407 0.3799 0.3343 0.2736 0.2280 0.1976 0.1672 0.1368 0.1064 0.0608 0.0304
9.0273 9.0273 3.8906 3.1003 2.3100 1.9605 1.6109 1.3982 1.1702 1.0334 0.8815 0.8055 0.7143 0.6231 0.5471 0.4863 0.4407 0.3951 0.3343 0.2736 0.2280 0.1976 0.1672 0.1368 0.1064 0.0608 0.0304
9.0881 9.0881 3.9514 3.1459 2.3404 1.9757 1.6261 1.4134 1.1854 1.0334 0.8815 0.8055 0.7143 0.6383 0.5471 0.5015 0.4407 0.3951 0.3343 0.2736 0.2280 0.1976 0.1672 0.1368 0.1064 0.0608 0.0304
9.1489 9.1489 4.0121 3.1915 2.3556 1.9909 1.6413 1.4134 1.2006 1.0486 0.8967 0.8055 0.7295 0.6383 0.5623 0.5015 0.4559 0.3951 0.3343 0.2736 0.2280 0.1976 0.1672 0.1368 0.1064 0.0608 0.0304
9.2097 9.2097 4.0729 3.2219 2.3708 2.0061 1.6413 1.4286 1.2006 1.0486 0.8967 0.8207 0.7295 0.6535 0.5623 0.5015 0.4559 0.3951 0.3343 0.2736 0.2280 0.1976 0.1672 0.1368 0.1064 0.0608 0.0304
9.2705 9.2705 4.1337 3.2675 2.4012 2.0213 1.6565 1.4438 1.2158 1.0638 0.9119 0.8207 0.7295 0.6535 0.5623 0.5015 0.4559 0.3951 0.3343 0.2736 0.2280 0.1976 0.1672 0.1368 0.1064 0.0608 0.0304
9.3161 9.3161 4.1793 3.2979 2.4164 2.0365 1.6717 1.4438 1.2158 1.0638 0.9119 0.8359 0.7447 0.6535 0.5623 0.5015 0.4559 0.3951 0.3343 0.2736 0.2280 0.1976 0.1672 0.1368 0.1064 0.0608 0.0304
9.3617 9.3617 4.2401 3.3283 2.4316 2.0517 1.6717 1.4438 1.2158 1.0638 0.9270 0.8359 0.7447 0.6535 0.5623 0.5015 0.4559 0.3951 0.3343 0.2736 0.2280 0.1976 0.1672 0.1368 0.1064 0.0608 0.0304
9.4073 9.4073 4.2857 3.3586 2.4468 2.0669 1.6869 1.4438 1.2158 1.0638 0.9270 0.8359 0.7447 0.6535 0.5623 0.5015 0.4559 0.3951 0.3343 0.2736 0.2280 0.1976 0.1672 0.1368 0.1064 0.0608 0.0304
9.4529 9.4529 4.3313 3.3890 2.4620 2.0821 1.7021 1.4590 1.2158 1.0638 0.9270 0.8359 0.7447 0.6535 0.5623 0.5015 0.4559 0.3951 0.3343 0.2736 0.2280 0.1976 0.1672 0.1368 0.1064 0.0608 0.0304
9.5288 9.5288 4.3921 3.4346 2.4772 2.0973 1.7021 1.4590 1.2158 1.0790 0.9270 0.8359 0.7447 0.6535 0.5623 0.5015 0.4559 0.3951 0.3343 0.2736 0.2280 0.1976 0.1672 0.1368 0.1064 0.0608 0.0304
9.5896 9.5896 4.4681 3.4802 2.4924 2.0973 1.7173 1.4742 1.2158 1.0790 0.9422 0.8511 0.7447 0.6535 0.5623 0.5167 0.4559 0.3951 0.3343 0.2736 0.2280 0.1976 0.1672 0.1368 0.1064 0.0608 0.0304
9.6504 9.6504 4.5289 3.5106 2.5076 2.1125 1.7173 1.4742 1.2310 1.0790 0.9422 0.8511 0.7599 0.6687 0.5775 0.5167 0.4559 0.3951 0.3343 0.2736 0.2280 0.1976 0.1672 0.1368 0.1064 0.0608 0.0304
9.7264 9.7264 4.6048 3.5562 2.5076 2.1125 1.7325 1.4742 1.2310 1.0942 0.9422 0.8511 0.7599 0.6687 0.5775 0.5167 0.4559 0.3951 0.3343 0.2736 0.2280 0.1976 0.1672 0.1368 0.1064 0.0608 0.0304`;
var DATA=RAW.split("\n").map(function(r){return r.trim().split(" ")});
var ROWS=["0.00","0.73","1.45","2.18","2.90","3.63","4.35","5.08","5.80","6.53","7.25","7.98","8.70","9.43","10.15","10.88","11.60"];
var MAX=9.7264;
function ramp(stops,t){
  for(var k=1;k<stops.length;k++){
    if(t<=stops[k][0]){
      var a=stops[k-1],b=stops[k],f=(t-a[0])/(b[0]-a[0]);
      return [0,1,2].map(function(n){return Math.round(a[1][n]+(b[1][n]-a[1][n])*f)});
    }
  }
  return stops[stops.length-1][1];
}
var CELL=[[0,[14,197,102]],[.05,[26,198,100]],[.1,[44,201,94]],[.16,[82,205,90]],[.23,[124,209,79]],[.31,[170,214,71]],[.39,[217,214,63]],[.47,[238,215,62]],[.65,[248,160,60]],[.85,[255,105,74]],[1,[255,90,72]]];
var SURF=[[0,[0,178,96]],[.12,[50,190,80]],[.25,[130,200,60]],[.36,[200,210,50]],[.46,[238,210,48]],[.62,[248,160,50]],[.82,[250,90,50]],[1,[246,50,44]]];
function rgb(c){return "rgb("+c.join(",")+")"}

var grid=document.getElementById("grid"),html='<div class="hc"></div>',c,r;
for(c=0;c<27;c++)html+='<div class="hc">'+(5+c*.5).toFixed(3)+'</div>';
for(r=0;r<17;r++){
  html+='<div class="hr'+(r===0?' s':'')+'">'+ROWS[r]+'</div>';
  for(c=0;c<27;c++){
    var col=ramp(CELL,parseFloat(DATA[r][c])/MAX);
    var tx=col.map(function(n){return Math.round(n*.28)});
    html+='<div style="background:'+rgb(col)+';color:'+rgb(tx)+'">'+DATA[r][c]+'</div>';
  }
}
grid.innerHTML=html;

var TOP=[[32.3,69.3],[184.3,80],[206.7,46.7],[86,38.7]],BOT=[[41.7,203.3],[177.7,218.3],[199.3,161.3],[90,146.7]];
function bil(q,u,v){var n=[0,1].map(function(i){
  var f=q[0][i]+(q[1][i]-q[0][i])*u,b=q[3][i]+(q[2][i]-q[3][i])*u;return b+(f-b)*v});return n}
function P(c,r,z){
  var u=(c+1)/27,v=r/16,t=z/MAX,b=bil(BOT,u,v),a=bil(TOP,u,v);
  return [b[0]+(a[0]-b[0])*t,b[1]+(a[1]-b[1])*t];
}
function Z(c,r){return parseFloat(DATA[r][c])}
function str(p){return p[0].toFixed(1)+","+p[1].toFixed(1)}
var s="";
for(r=0;r<16;r++){
  for(c=0;c<26;c++){
    var d=Math.abs(Z(c+1,r)-Z(c,r)),n=Math.max(1,Math.ceil(d/.12));
    for(var k=0;k<n;k++){
      var f0=k/n,f1=(k+1)/n;
      var z00=Z(c,r)+(Z(c+1,r)-Z(c,r))*f0,z01=Z(c,r)+(Z(c+1,r)-Z(c,r))*f1;
      var z10=Z(c,r+1)+(Z(c+1,r+1)-Z(c,r+1))*f0,z11=Z(c,r+1)+(Z(c+1,r+1)-Z(c,r+1))*f1;
      var cc=rgb(ramp(SURF,(z00+z01+z10+z11)/4/MAX));
      s+='<polygon fill="'+cc+'" stroke="'+cc+'" stroke-width=".4" points="'+
        str(P(c+f0,r,z00))+" "+str(P(c+f1,r,z01))+" "+str(P(c+f1,r+1,z11))+" "+str(P(c+f0,r+1,z10))+'"/>';
    }
  }
}
var ln="";
for(r=0;r<17;r++){ln+="M";for(c=0;c<27;c++)ln+=(c?"L":"")+str(P(c,r,Z(c,r)));}
for(c=0;c<27;c++){ln+="M";for(r=0;r<17;r++)ln+=(r?"L":"")+str(P(c,r,Z(c,r)));}
s+='<path d="'+ln.replace(/,/g," ")+'" fill="none" stroke="#3a3a20" stroke-opacity=".4" stroke-width=".45"/>';
document.getElementById("surf").innerHTML=s;
```
